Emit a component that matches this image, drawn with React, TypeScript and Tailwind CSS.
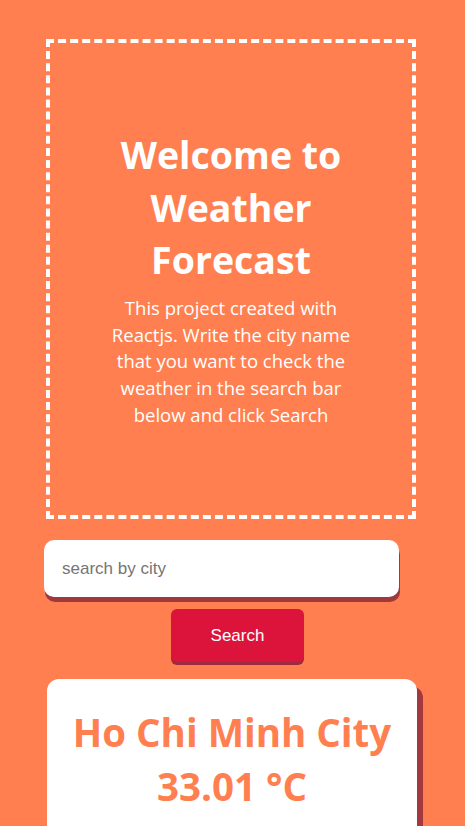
import React from "react";

export default function App() {
  return (
    <div className="min-h-[826px] w-full bg-[#ff7f50] pt-[39px]" style={{ fontFamily: '"Open Sans", "Noto Sans", sans-serif' }}>
      <div className="ml-[46px] flex h-[480px] w-[370px] flex-col items-center justify-center border-4 border-dashed border-white px-[50px] text-center text-white">
        <h1 className="text-[37.5px] font-bold leading-[52.5px]">Welcome to Weather Forecast</h1>
        <p className="mt-[8px] text-[18.5px] leading-[26.8px]">
          This project created with Reactjs. Write the city name that you want to check the weather in the search bar below and click Search
        </p>
      </div>
      <div className="ml-[44px] mt-[21px] w-[355px]">
        <input
          className="h-[57px] w-full rounded-[10px] bg-white pl-[18px] text-[17px] text-black shadow-[1px_5px_0_#9e3a3e] outline-none placeholder:text-[#757575]"
          style={{ fontFamily: '"Liberation Sans", Arial, sans-serif' }}
          placeholder="search by city"
        />
      </div>
      <div className="mt-[12px] flex justify-center">
        <button
          className="ml-[10px] h-[53px] w-[133px] rounded-[6px] bg-[#dc143c] text-[17px] text-white shadow-[0_3px_0_#9e2a3e]"
          style={{ fontFamily: '"Liberation Sans", Arial, sans-serif' }}
        >
          Search
        </button>
      </div>
      <div className="ml-[47px] mt-[17px] w-[370px] rounded-t-[12px] bg-white pb-[40px] pt-[26px] text-center text-[#ff7f50] shadow-[6px_7px_0_#a3383f]">
        <h2 className="text-[38.5px] font-bold leading-[54px]">Ho Chi Minh City</h2>
        <h2 className="text-[38.5px] font-bold leading-[54px]">33.01 °C</h2>
      </div>
    </div>
  );
}
